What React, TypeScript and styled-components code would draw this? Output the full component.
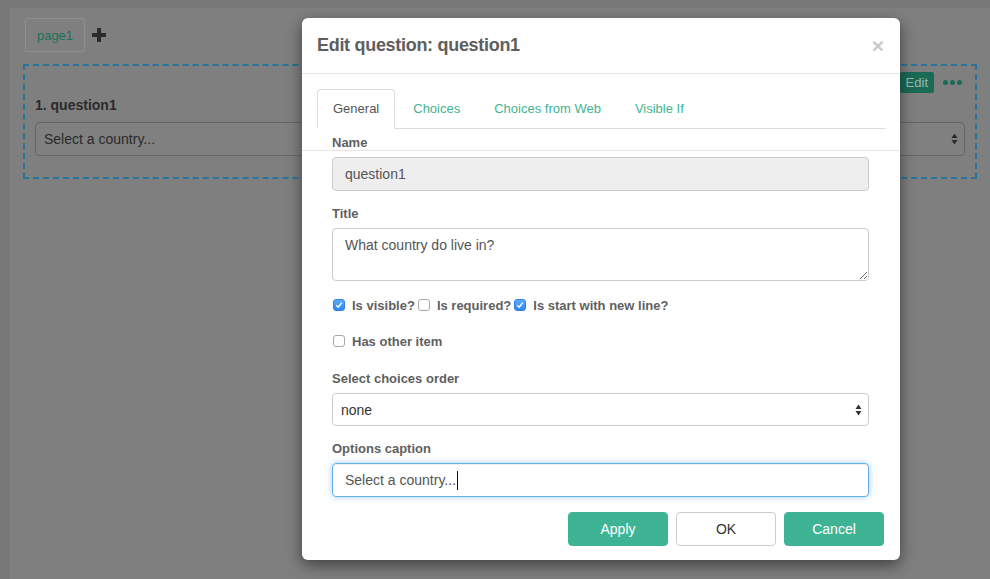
import React from "react";
import styled, { createGlobalStyle } from "styled-components";

const GlobalStyle = createGlobalStyle`
  html, body {
    margin: 0;
    padding: 0;
  }
  body {
    font-family: "Liberation Sans", Arial, sans-serif;
    background: #787878;
  }
  * {
    box-sizing: border-box;
  }
`;

const green = "#3fb494";

const Screen = styled.div`
  position: relative;
  width: 990px;
  height: 579px;
  overflow: hidden;
  background: #787878;
  padding: 8px 0 0 10px;
`;

/* the editor page, seen through the modal backdrop */
const Panel = styled.div`
  height: 100%;
  background: #7f7f7f;
  padding: 10px 13px 0 13px;
`;

const PagesBar = styled.div`
  display: flex;
  align-items: center;
  gap: 7px;
  padding-left: 2px;
`;

const PageTab = styled.div`
  width: 60px;
  height: 34px;
  border: 1px solid #8e8e8e;
  border-radius: 3px;
  color: #1c7258;
  font-size: 13px;
  display: flex;
  align-items: center;
  justify-content: center;
`;

const QuestionBox = styled.div`
  margin-top: 12px;
  border: 2px dashed #26759a;
  padding: 6px 10px 21px 10px;
`;

const QuestionToolbar = styled.div`
  display: flex;
  justify-content: flex-end;
  align-items: center;
  height: 21px;
  gap: 9px;
  padding-right: 3px;
`;

const EditButton = styled.div`
  height: 21px;
  padding: 0 6px;
  background: #1b6a56;
  color: #9bbab0;
  font-size: 13px;
  line-height: 21px;
  border-radius: 2px;
`;

const Dots = styled.div`
  display: flex;
  gap: 2px;
  span {
    width: 5px;
    height: 5px;
    border-radius: 50%;
    background: #1b6a56;
  }
`;

const QuestionTitle = styled.div`
  margin: 2px 0 7px;
  font-size: 14px;
  font-weight: bold;
  line-height: 20px;
  color: #2b2b2b;
`;

const SelectBox = styled.div<{ $dim?: boolean }>`
  position: relative;
  height: ${(p) => (p.$dim ? "34px" : "33px")};
  border: 1px solid ${(p) => (p.$dim ? "#666" : "#ccc")};
  background: ${(p) => (p.$dim ? "#808080" : "#fff")};
  border-radius: 4px;
  padding: 0 8px;
  display: flex;
  align-items: center;
  font-size: 14px;
  color: ${(p) => (p.$dim ? "#2a2a2a" : "#333")};
  svg {
    position: absolute;
    right: 6px;
    top: 50%;
    transform: translateY(-50%);
  }
`;

/* modal */
const Modal = styled.div`
  position: absolute;
  left: 302px;
  top: 18px;
  width: 598px;
  background: #fff;
  border-radius: 6px;
  box-shadow: 0 5px 15px rgba(0, 0, 0, 0.5);
  display: flex;
  flex-direction: column;
`;

const Header = styled.div`
  display: flex;
  justify-content: space-between;
  align-items: center;
  padding: 15px;
  border-bottom: 1px solid #e5e5e5;
`;

const Title = styled.h4`
  margin: 0;
  font-size: 18px;
  line-height: 25px;
  font-weight: bold;
  letter-spacing: -0.3px;
  color: #5e5e5e;
`;

const Close = styled.span`
  font-size: 21px;
  font-weight: bold;
  line-height: 1;
  color: #c9c9c9;
  margin-right: 1px;
`;

const TabsArea = styled.div`
  padding: 15px 15px 0;
`;

const NavTabs = styled.div`
  display: flex;
  border-bottom: 1px solid #ddd;
`;

const Tab = styled.div<{ $active?: boolean }>`
  padding: 10px 15px;
  margin-right: 2px;
  margin-bottom: -1px;
  font-size: 13px;
  line-height: 18px;
  border: 1px solid ${(p) => (p.$active ? "#ddd" : "transparent")};
  border-bottom-color: ${(p) => (p.$active ? "#fff" : "transparent")};
  border-radius: 4px 4px 0 0;
  background: ${(p) => (p.$active ? "#fff" : "transparent")};
  color: ${(p) => (p.$active ? "#555" : green)};
`;

const Label = styled.label`
  display: block;
  font-size: 13px;
  font-weight: bold;
  line-height: 18px;
  margin-bottom: 5px;
  color: #5f5f5f;
`;

const NameLabel = styled(Label)`
  margin: 6px 0 0;
  padding: 0 30px;
  line-height: 15px;
`;

const FormBody = styled.div`
  border-top: 1px solid #e5e5e5;
  padding: 6px 31px 0 30px;
`;

const Field = styled.div<{ $gap?: number }>`
  margin-bottom: ${(p) => p.$gap ?? 15}px;
`;

const TextInput = styled.input`
  display: block;
  width: 100%;
  height: 34px;
  padding: 6px 12px;
  font-family: inherit;
  font-size: 14px;
  line-height: 20px;
  color: #555;
  border: 1px solid #ccc;
  border-radius: 4px;
  background: #fff;
  &:disabled {
    background: #eee;
  }
`;

const TextArea = styled.textarea`
  display: block;
  width: 100%;
  height: 53px;
  padding: 6px 12px;
  font-family: inherit;
  font-size: 14px;
  line-height: 20px;
  color: #555;
  border: 1px solid #ccc;
  border-radius: 4px;
  outline: none;
`;

const FocusedInput = styled.div`
  height: 34px;
  padding: 0 12px;
  display: flex;
  align-items: center;
  font-size: 14px;
  color: #555;
  border: 1px solid #66afe9;
  border-radius: 4px;
  box-shadow: inset 0 1px 1px rgba(0, 0, 0, 0.075), 0 0 6px rgba(102, 175, 233, 0.6);
`;

const Caret = styled.span`
  display: inline-block;
  width: 1px;
  height: 19px;
  background: #111;
  margin-left: 1px;
`;

const CheckRow = styled.div<{ $gap: number }>`
  display: flex;
  align-items: center;
  height: 20px;
  margin-bottom: ${(p) => p.$gap}px;
  padding-left: 1px;
`;

const CheckItem = styled.span`
  display: flex;
  align-items: center;
  margin-right: 3px;
  font-size: 13px;
  font-weight: bold;
  color: #5f5f5f;
`;

const Box = styled.span<{ $checked?: boolean }>`
  width: 12px;
  height: 12px;
  margin-right: 7px;
  border-radius: 3px;
  display: flex;
  align-items: center;
  justify-content: center;
  background: ${(p) => (p.$checked ? "linear-gradient(#5aa9ff, #2f86f2)" : "#fff")};
  border: 1px solid ${(p) => (p.$checked ? "#2f7fe4" : "#a9a9a9")};
`;

const Footer = styled.div`
  display: flex;
  justify-content: flex-end;
  gap: 8px;
  padding: 15px 16px 14px;
`;

const Button = styled.div<{ $primary?: boolean }>`
  width: 100px;
  height: 34px;
  display: flex;
  align-items: center;
  justify-content: center;
  font-size: 14px;
  border-radius: 4px;
  border: 1px solid ${(p) => (p.$primary ? green : "#ccc")};
  background: ${(p) => (p.$primary ? green : "#fff")};
  color: ${(p) => (p.$primary ? "#fff" : "#333")};
`;

function Arrows({ color }: { color: string }) {
  return (
    <svg width="7" height="12" viewBox="0 0 7 12">
      <path d="M3.5 0.5 L6.5 5 L0.5 5 Z" fill={color} />
      <path d="M0.5 7 L6.5 7 L3.5 11.5 Z" fill={color} />
    </svg>
  );
}

function Check({ checked, label }: { checked?: boolean; label: string }) {
  return (
    <CheckItem>
      <Box $checked={checked}>
        {checked && (
          <svg width="8" height="8" viewBox="0 0 8 8">
            <path d="M1.2 4.2 L3.2 6.2 L6.8 1.6" stroke="#fff" strokeWidth="1.5" fill="none" />
          </svg>
        )}
      </Box>
      {label}
    </CheckItem>
  );
}

export default function App() {
  return (
    <>
      <GlobalStyle />
      <Screen>
        <Panel>
          <PagesBar>
            <PageTab>page1</PageTab>
            <svg width="14" height="14" viewBox="0 0 14 14">
              <rect x="5" y="0" width="4" height="14" fill="#2b2b2b" />
              <rect x="0" y="5" width="14" height="4" fill="#2b2b2b" />
            </svg>
          </PagesBar>
          <QuestionBox>
            <QuestionToolbar>
              <EditButton>Edit</EditButton>
              <Dots>
                <span />
                <span />
                <span />
              </Dots>
            </QuestionToolbar>
            <QuestionTitle>1. question1</QuestionTitle>
            <SelectBox $dim>
              Select a country...
              <Arrows color="#2a2a2a" />
            </SelectBox>
          </QuestionBox>
        </Panel>

        <Modal>
          <Header>
            <Title>Edit question: question1</Title>
            <Close>×</Close>
          </Header>
          <TabsArea>
            <NavTabs>
              <Tab $active>General</Tab>
              <Tab>Choices</Tab>
              <Tab>Choices from Web</Tab>
              <Tab>Visible If</Tab>
            </NavTabs>
          </TabsArea>
          <NameLabel>Name</NameLabel>
          <FormBody>
            <Field $gap={14}>
              <TextInput disabled value="question1" readOnly />
            </Field>
            <Field $gap={14}>
              <Label>Title</Label>
              <TextArea defaultValue="What country do live in?" />
            </Field>
            <CheckRow $gap={16}>
              <Check checked label="Is visible?" />
              <Check label="Is required?" />
              <Check checked label="Is start with new line?" />
            </CheckRow>
            <CheckRow $gap={19}>
              <Check label="Has other item" />
            </CheckRow>
            <Field $gap={14}>
              <Label>Select choices order</Label>
              <SelectBox>
                none
                <Arrows color="#333" />
              </SelectBox>
            </Field>
            <Field $gap={0}>
              <Label>Options caption</Label>
              <FocusedInput>
                Select a country...
                <Caret />
              </FocusedInput>
            </Field>
          </FormBody>
          <Footer>
            <Button $primary>Apply</Button>
            <Button>OK</Button>
            <Button $primary>Cancel</Button>
          </Footer>
        </Modal>
      </Screen>
    </>
  );
}
